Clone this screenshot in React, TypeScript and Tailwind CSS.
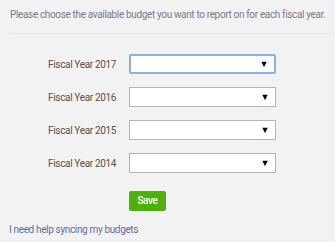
const years = [2017, 2016, 2015, 2014];

function FakeSelect({ focused }: { focused?: boolean }) {
  return (
    <div
      className={
        "flex h-[20px] w-[147px] items-center justify-end bg-white pr-[6px] " +
        (focused
          ? "border-2 border-[#8ab0ec] rounded-[2px]"
          : "border border-[#b5b5b5]")
      }
    >
      <span className="text-[9px] leading-none text-black">▼</span>
    </div>
  );
}

export default function App() {
  return (
    <div className="h-[242px] w-[335px] bg-[#f2f2f2] font-['Roboto',sans-serif] tracking-[-0.35px]">
      <p className="whitespace-nowrap pl-[10px] pt-[9px] text-[10px] leading-[12px] text-[#7b7b88]">
        Please choose the available budget you want to report on for each fiscal year.
      </p>
      <div className="ml-[9px] mt-[12px] h-px bg-[#e9e9e9]" />

      <div className="mt-[20px] flex flex-col gap-[13px]">
        {years.map((y, i) => (
          <div key={y} className="flex items-center">
            <span className="w-[129px] shrink-0 pr-[13px] text-right text-[10px] text-[#5e5049]">
              Fiscal Year {y}
            </span>
            <FakeSelect focused={i === 0} />
          </div>
        ))}
      </div>

      <div className="ml-[129px] mt-[14px]">
        <button className="h-[20px] w-[37px] rounded-[2px] bg-[#4cb10a] text-[10px] font-medium text-white">
          Save
        </button>
      </div>

      <a className="ml-[9px] mt-[12px] block text-[10px] leading-[14px] text-[#5f6fa0]" href="#">
        I need help syncing my budgets
      </a>
    </div>
  );
}
